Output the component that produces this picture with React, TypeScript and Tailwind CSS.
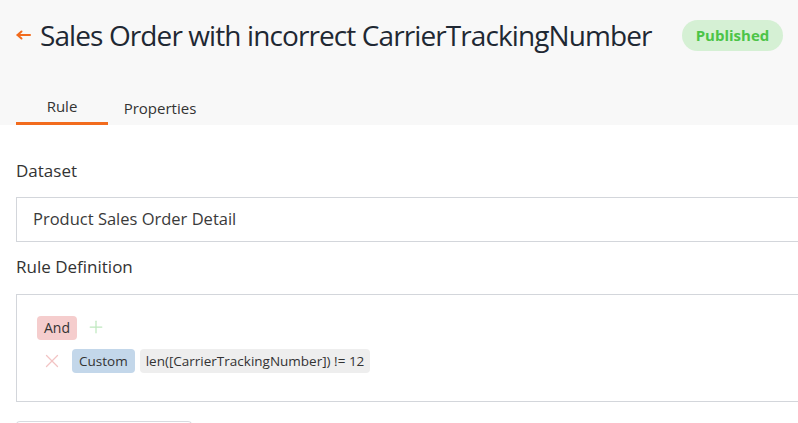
import { Plus, X } from 'lucide-react';

const font = { fontFamily: '"Open Sans", "Noto Sans", sans-serif' };

function BackArrow() {
  return (
    <svg width="15" height="14" viewBox="0 0 15 14" fill="none" stroke="#f26b1d" strokeWidth="2" strokeLinecap="round" strokeLinejoin="round">
      <path d="M1.5 7H14" />
      <path d="M5.5 3.5 1.5 7l4 3.5" />
    </svg>
  );
}

export default function App() {
  return (
    <div className="h-[423px] w-[798px] overflow-hidden bg-white text-[#333]" style={font}>
      <div className="bg-[#f8f8f8] pl-4">
        <div className="flex h-[70px] items-center">
          <BackArrow />
          <h1 className="ml-[9px] whitespace-nowrap text-[28px] font-normal tracking-[-0.9px] text-[#1f2833]">
            Sales Order with incorrect CarrierTrackingNumber
          </h1>
          <span className="ml-[30px] rounded-full bg-[#d5f0d4] px-[14px] py-[5px] text-[15px] font-bold leading-[21px] text-[#4cc447]">
            Published
          </span>
        </div>
        <div className="flex h-[55px] items-stretch text-[15px] text-[#333]">
          <div className="flex w-[92px] items-center justify-center border-b-[3px] border-[#f26b1d] pt-[21px]">Rule</div>
          <div className="flex w-[104px] items-center justify-center pt-[21px]">Properties</div>
        </div>
      </div>

      <div className="pl-4">
        <div className="pt-[34px] text-[17px] leading-6">Dataset</div>
        <div className="mt-[14px] flex h-[45px] w-[800px] items-center border border-[#d3d6db] pl-4 text-[16.5px] text-[#3a3a3a]">
          Product Sales Order Detail
        </div>
        <div className="mt-[13px] text-[17px] leading-6">Rule Definition</div>
        <div className="mt-[15px] h-[108px] w-[800px] border border-[#d3d6db] pl-5 pt-[21px]">
          <div className="flex items-center">
            <span className="rounded-[4px] bg-[#f5cdcd] px-[7px] text-[14px] leading-[24px] text-[#333]">And</span>
            <Plus className="ml-[9px] -mt-[2px] h-5 w-5 text-[#bfe8bf]" strokeWidth={1.5} />
          </div>
          <div className="mt-[9px] flex items-center">
            <X className="ml-[4px] h-[22px] w-[22px] text-[#f2c4c4]" strokeWidth={1.4} />
            <span className="ml-[9px] rounded-[4px] bg-[#c3d7ea] px-[7px] text-[13.5px] leading-[24px] text-[#333]">Custom</span>
            <span className="ml-[5px] rounded-[4px] bg-[#eeeeee] px-[6px] text-[13.5px] leading-[24px] text-[#333]">
              len([CarrierTrackingNumber]) != 12
            </span>
          </div>
        </div>
        <div className="mt-[19px] h-[20px] w-[176px] rounded-t-[4px] border-x border-t border-[#d8dbe0]" />
      </div>
    </div>
  );
}
